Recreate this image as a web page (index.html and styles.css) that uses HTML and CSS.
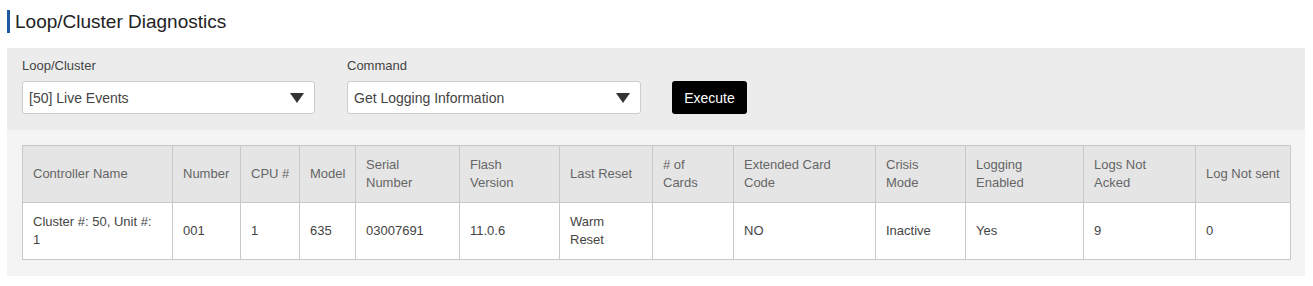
FILE: index.html
```html
<!DOCTYPE html>
<html lang="en">
<head>
  <meta charset="UTF-8" />
  <title>Loop/Cluster Diagnostics</title>
  <link rel="stylesheet" href="styles.css">
</head>
<body>

<h2 class="page-title">Loop/Cluster Diagnostics</h2>

<div class="panel">
  <div class="controls">
    <div class="field field-loop">
      <label>Loop/Cluster</label>
      <div class="select">
        <span>[50] Live Events</span>
        <svg width="14" height="10" viewBox="0 0 14 10"><polygon points="0,0 14,0 7,10" fill="#333"/></svg>
      </div>
    </div>
    <div class="field field-cmd">
      <label>Command</label>
      <div class="select">
        <span>Get Logging Information</span>
        <svg width="14" height="10" viewBox="0 0 14 10"><polygon points="0,0 14,0 7,10" fill="#333"/></svg>
      </div>
    </div>
    <button class="execute">Execute</button>
  </div>

  <div class="results">
    <table>
      <colgroup>
        <col style="width:150px"><col style="width:68px"><col style="width:59px"><col style="width:56px">
        <col style="width:104px"><col style="width:100px"><col style="width:93px"><col style="width:81px">
        <col style="width:142px"><col style="width:90px"><col style="width:118px"><col style="width:112px">
        <col style="width:95px">
      </colgroup>
      <thead>
        <tr>
          <th>Controller Name</th>
          <th>Number</th>
          <th class="nowrap">CPU #</th>
          <th>Model</th>
          <th>Serial<br>Number</th>
          <th>Flash<br>Version</th>
          <th>Last Reset</th>
          <th># of<br>Cards</th>
          <th>Extended Card<br>Code</th>
          <th>Crisis<br>Mode</th>
          <th>Logging<br>Enabled</th>
          <th>Logs Not<br>Acked</th>
          <th class="nowrap">Log Not sent</th>
        </tr>
      </thead>
      <tbody>
        <tr>
          <td>Cluster #: 50, Unit #:<br>1</td>
          <td>001</td>
          <td>1</td>
          <td>635</td>
          <td>03007691</td>
          <td>11.0.6</td>
          <td>Warm<br>Reset</td>
          <td></td>
          <td>NO</td>
          <td>Inactive</td>
          <td>Yes</td>
          <td>9</td>
          <td>0</td>
        </tr>
      </tbody>
    </table>
  </div>
</div>

</body>
</html>
```

FILE: styles.css
```css
body {
  margin: 0;
  font-family: "Liberation Sans", Arial, sans-serif;
  background: #fff;
  color: #333;
}
.page-title {
  margin: 10px 0 15px 7px;
  padding-left: 5px;
  border-left: 3px solid #1b5ba3;
  font-size: 19px;
  font-weight: normal;
  line-height: 23px;
  color: #222;
}
.panel {
  margin: 0 8px 0 7px;
  background: #f4f4f4;
}
.controls {
  display: flex;
  align-items: flex-end;
  background: #ececec;
  padding: 10px 15px 16px;
}
.field label {
  display: block;
  font-size: 13px;
  color: #444;
  line-height: 16px;
  margin-bottom: 7px;
}
.field-loop {
  width: 293px;
  margin-right: 32px;
}
.field-cmd {
  width: 294px;
  margin-right: 31px;
}
.select {
  display: flex;
  align-items: center;
  justify-content: space-between;
  height: 31px;
  padding: 0 10px 0 6px;
  background: #fff;
  border: 1px solid #ccc;
  border-radius: 3px;
  font-size: 14px;
  color: #444;
}
.execute {
  width: 75px;
  height: 33px;
  background: #000;
  color: #fff;
  border: none;
  border-radius: 3px;
  font-family: inherit;
  font-size: 14px;
  padding: 0;
}
.results {
  padding: 15px 15px 16px;
}
table {
  border-collapse: collapse;
  table-layout: fixed;
  width: 1269px;
  background: #fff;
  font-size: 13px;
  color: #555;
}
th, td {
  border: 1px solid #c8c8c8;
  text-align: left;
  padding: 0 10px;
  line-height: 18px;
  height: 56px;
  font-weight: normal;
}
th {
  background: #e5e5e5;
  color: #666;
}
th.nowrap {
  white-space: nowrap;
  padding-right: 0;
}
td {
  color: #444;
}
```
